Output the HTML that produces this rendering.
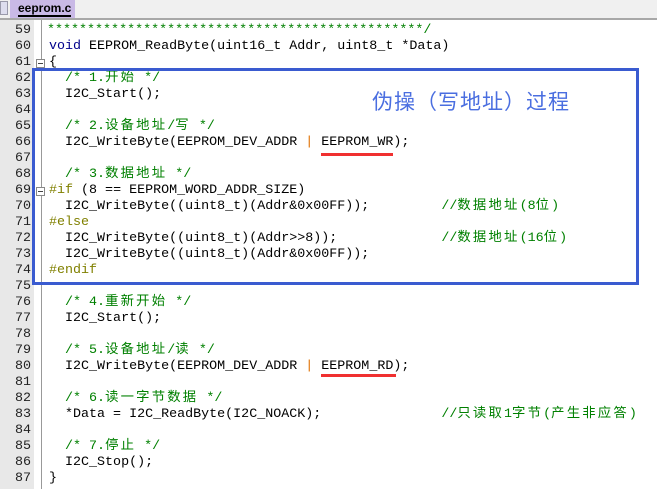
<!DOCTYPE html>
<html><head><meta charset="utf-8"><style>
body{margin:0;width:657px;height:489px;overflow:hidden;background:#fff;position:relative;font-family:"Liberation Mono","Noto Sans CJK SC",monospace;}
.tabbar{position:absolute;left:0;top:0;width:657px;height:18px;background:#f0f0f0;border-bottom:2px solid #a8a8a8;}
.tab{position:absolute;left:10px;top:0;width:65px;height:18px;background:#c9b9e6;font:bold 12px "Liberation Sans",sans-serif;color:#000;}
.tab span{position:absolute;left:8px;top:1px;border-bottom:2px solid #000;line-height:14px;}
.icon{position:absolute;left:0;top:1px;width:6px;height:12px;background:#dde;border:1px solid #99a;}
.gutter{position:absolute;left:0;top:20px;width:34px;height:469px;background:#e8e8e8;}
.fold{position:absolute;left:41px;top:20px;width:1px;height:469px;background:#999;}
.row{position:absolute;left:0;height:16px;line-height:16px;font-size:13.35px;white-space:pre;}
.n{position:absolute;left:0;width:31px;text-align:right;color:#222;}
.c{position:absolute;left:49px;color:#000;}
.z{letter-spacing:2.2px}
.g{color:#008000}.k{color:#00008b}.p{color:#808000}.o{color:#e07000}
.box{position:absolute;left:32px;top:68px;width:601px;height:211px;border:3px solid #3a5bd0;}
.title{position:absolute;left:372px;top:86px;font:21px "Noto Sans CJK SC",sans-serif;color:#4a6ee0;letter-spacing:1px}
.ul{position:absolute;height:3px;background:#f03030;}
.fb{position:absolute;left:36px;width:9px;height:9px;border:1px solid #888;background:#fff;box-sizing:border-box;}
.fb:after{content:"";position:absolute;left:1px;top:3px;width:5px;height:1px;background:#444;}
</style></head><body>
<div class="tabbar"><div class="icon"></div><div class="tab"><span>eeprom.c</span></div></div>
<div class="gutter"></div><div class="fold"></div>
<div class="row" style="top:23px"><span class="n">59</span><span class="c g" style="left:47px">***********************************************/</span></div>
<div class="row" style="top:39px"><span class="n">60</span><span class="c"><span class="k">void</span> EEPROM_ReadByte(uint16_t Addr, uint8_t *Data)</span></div>
<div class="row" style="top:55px"><span class="n">61</span><span class="c">{</span></div>
<div class="row" style="top:71px"><span class="n">62</span><span class="c g">  /* 1.<span class="z">开始</span> */</span></div>
<div class="row" style="top:87px"><span class="n">63</span><span class="c">  I2C_Start();</span></div>
<div class="row" style="top:103px"><span class="n">64</span></div>
<div class="row" style="top:119px"><span class="n">65</span><span class="c g">  /* 2.<span class="z">设备地址</span>/<span class="z">写</span> */</span></div>
<div class="row" style="top:135px"><span class="n">66</span><span class="c">  I2C_WriteByte(EEPROM_DEV_ADDR <span class="o">|</span> EEPROM_WR);</span></div>
<div class="row" style="top:151px"><span class="n">67</span></div>
<div class="row" style="top:167px"><span class="n">68</span><span class="c g">  /* 3.<span class="z">数据地址</span> */</span></div>
<div class="row" style="top:183px"><span class="n">69</span><span class="c"><span class="p">#if</span> (8 == EEPROM_WORD_ADDR_SIZE)</span></div>
<div class="row" style="top:199px"><span class="n">70</span><span class="c">  I2C_WriteByte((uint8_t)(Addr&amp;0x00FF));         <span class="g">//<span class="z">数据地址</span>(8<span class="z">位</span>)</span></span></div>
<div class="row" style="top:215px"><span class="n">71</span><span class="c p">#else</span></div>
<div class="row" style="top:231px"><span class="n">72</span><span class="c">  I2C_WriteByte((uint8_t)(Addr&gt;&gt;8));             <span class="g">//<span class="z">数据地址</span>(16<span class="z">位</span>)</span></span></div>
<div class="row" style="top:247px"><span class="n">73</span><span class="c">  I2C_WriteByte((uint8_t)(Addr&amp;0x00FF));</span></div>
<div class="row" style="top:263px"><span class="n">74</span><span class="c p">#endif</span></div>
<div class="row" style="top:279px"><span class="n">75</span></div>
<div class="row" style="top:295px"><span class="n">76</span><span class="c g">  /* 4.<span class="z">重新开始</span> */</span></div>
<div class="row" style="top:311px"><span class="n">77</span><span class="c">  I2C_Start();</span></div>
<div class="row" style="top:327px"><span class="n">78</span></div>
<div class="row" style="top:343px"><span class="n">79</span><span class="c g">  /* 5.<span class="z">设备地址</span>/<span class="z">读</span> */</span></div>
<div class="row" style="top:359px"><span class="n">80</span><span class="c">  I2C_WriteByte(EEPROM_DEV_ADDR <span class="o">|</span> EEPROM_RD);</span></div>
<div class="row" style="top:375px"><span class="n">81</span></div>
<div class="row" style="top:391px"><span class="n">82</span><span class="c g">  /* 6.<span class="z">读一字节数据</span> */</span></div>
<div class="row" style="top:407px"><span class="n">83</span><span class="c">  *Data = I2C_ReadByte(I2C_NOACK);               <span class="g">//<span class="z">只读取</span>1<span class="z">字节</span>(<span class="z">产生非应答</span>)</span></span></div>
<div class="row" style="top:423px"><span class="n">84</span></div>
<div class="row" style="top:439px"><span class="n">85</span><span class="c g">  /* 7.<span class="z">停止</span> */</span></div>
<div class="row" style="top:455px"><span class="n">86</span><span class="c">  I2C_Stop();</span></div>
<div class="row" style="top:471px"><span class="n">87</span><span class="c">}</span></div>
<div class="fb" style="top:59px"></div>
<div class="fb" style="top:187px"></div>
<div class="box"></div>
<div class="title">伪操（写地址）过程</div>
<div class="ul" style="left:321px;top:153px;width:72px"></div>
<div class="ul" style="left:321px;top:374px;width:75px"></div>
</body></html>
